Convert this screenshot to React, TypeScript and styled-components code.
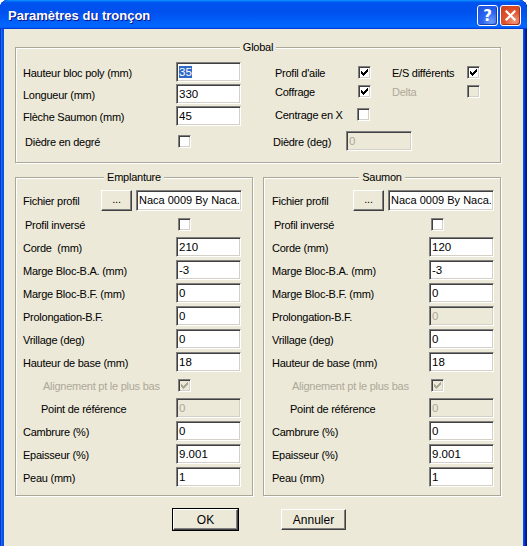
import { FC } from "react";
import styled, { createGlobalStyle } from "styled-components";

const GlobalStyle = createGlobalStyle`
    html, body {
        margin: 0;
        padding: 0;
        background: #ffffff;
    }
    body {
        font-family: "Liberation Sans", Arial, sans-serif;
        font-size: 11px;
        letter-spacing: -0.25px;
        color: #000;
    }
`;

type Row =
    | { kind: "file" }
    | { kind: "input"; label: string; value: string; disabled?: boolean; indent?: number }
    | { kind: "check"; label: string; checked?: boolean; disabled?: boolean; indent?: number };

const panelRows = (corde: string, cordeLabel: string, prolongDisabled: boolean): Row[] => [
    { kind: "file" },
    { kind: "check", label: "Profil inversé", indent: 2 },
    { kind: "input", label: cordeLabel, value: corde },
    { kind: "input", label: "Marge Bloc-B.A. (mm)", value: "-3" },
    { kind: "input", label: "Marge Bloc-B.F. (mm)", value: "0" },
    { kind: "input", label: "Prolongation-B.F.", value: "0", disabled: prolongDisabled },
    { kind: "input", label: "Vrillage (deg)", value: "0" },
    { kind: "input", label: "Hauteur de base (mm)", value: "18" },
    { kind: "check", label: "Alignement pt le plus bas", checked: true, disabled: true, indent: 20 },
    { kind: "input", label: "Point de référence", value: "0", disabled: true, indent: 18 },
    { kind: "input", label: "Cambrure (%)", value: "0" },
    { kind: "input", label: "Epaisseur (%)", value: "9.001" },
    { kind: "input", label: "Peau (mm)", value: "1" },
];

const Tick: FC<{ disabled?: boolean }> = ({ disabled }) => (
    <svg width="7" height="7" viewBox="0 0 7 7" shapeRendering="crispEdges">
        <polygon
            points="0,2 2,4 7,-1 7,2 2,7 0,5"
            fill={disabled ? "#ACA899" : "#000"}
        />
    </svg>
);

const Check: FC<{ checked?: boolean; disabled?: boolean }> = ({ checked, disabled }) => (
    <CheckBox $disabled={disabled}>{checked && <Tick disabled={disabled} />}</CheckBox>
);

const Panel: FC<{
    title: string;
    rows: Row[];
    padLeft: number;
    labelWidth: number;
    fileLabelWidth: number;
}> = ({ title, rows, padLeft, labelWidth, fileLabelWidth }) => (
    <GroupBox $width={238}>
        <Caption>{title}</Caption>
        <PanelBody $padLeft={padLeft}>
            {rows.map((row, i) => {
                if (row.kind === "file") {
                    return (
                        <FileRow key={i}>
                            <Label $w={fileLabelWidth}>Fichier profil</Label>
                            <SmallButton>...</SmallButton>
                            <NameBox>Naca 0009 By Naca.</NameBox>
                        </FileRow>
                    );
                }
                if (row.kind === "check") {
                    return (
                        <FieldRow key={i}>
                            <Label $w={labelWidth} $indent={row.indent} $disabled={row.disabled}>
                                {row.label}
                            </Label>
                            <CheckSlot>
                                <Check checked={row.checked} disabled={row.disabled} />
                            </CheckSlot>
                        </FieldRow>
                    );
                }
                return (
                    <FieldRow key={i}>
                        <Label $w={labelWidth} $indent={row.indent}>
                            {row.label}
                        </Label>
                        <TextBox $disabled={row.disabled}>{row.value}</TextBox>
                    </FieldRow>
                );
            })}
        </PanelBody>
    </GroupBox>
);

const App: FC = () => (
    <>
        <GlobalStyle />
        <Window>
            <TitleBar>
                <Title>Paramètres du tronçon</Title>
                <TitleButtons>
                    <HelpButton>?</HelpButton>
                    <CloseButton>
                        <svg width="11" height="11" viewBox="0 0 11 11">
                            <path
                                d="M1.5 1.5 L9.5 9.5 M9.5 1.5 L1.5 9.5"
                                stroke="#fff"
                                strokeWidth="2.2"
                                strokeLinecap="square"
                            />
                        </svg>
                    </CloseButton>
                </TitleButtons>
            </TitleBar>
            <Client>
                <GroupBox $width={486}>
                    <Caption>Global</Caption>
                    <GlobalBody>
                        <Column $width={218}>
                            <FieldRow>
                                <Label $w={153}>Hauteur bloc poly (mm)</Label>
                                <TextBox>
                                    <Selected>35</Selected>
                                </TextBox>
                            </FieldRow>
                            <FieldRow>
                                <Label $w={153}>Longueur (mm)</Label>
                                <TextBox>330</TextBox>
                            </FieldRow>
                            <FieldRow>
                                <Label $w={153}>Flèche Saumon (mm)</Label>
                                <TextBox>45</TextBox>
                            </FieldRow>
                            <FieldRow $mt={3}>
                                <Label $w={153} $indent={2}>Dièdre en degré</Label>
                                <CheckSlot>
                                    <Check />
                                </CheckSlot>
                            </FieldRow>
                        </Column>
                        <Column $width={210}>
                            <CheckRow $mt={2}>
                                <Label $w={83}>Profil d'aile</Label>
                                <Check checked />
                                <Label $w={75} $ml={21}>E/S différents</Label>
                                <Check checked />
                            </CheckRow>
                            <CheckRow $mt={1}>
                                <Label $w={83}>Coffrage</Label>
                                <Check checked />
                                <Label $w={75} $ml={21} $disabled>Delta</Label>
                                <Check disabled />
                            </CheckRow>
                            <CheckRow $mt={5}>
                                <Label $w={82}>Centrage en X</Label>
                                <Check />
                            </CheckRow>
                            <FieldRow $mt={7}>
                                <Label $w={73} $indent={-2}>Dièdre (deg)</Label>
                                <TextBox $disabled $width={66}>0</TextBox>
                            </FieldRow>
                        </Column>
                    </GlobalBody>
                </GroupBox>
                <Panels>
                    <Panel
                        title="Emplanture"
                        rows={panelRows("210", "Corde  (mm)", false)}
                        padLeft={7}
                        labelWidth={153}
                        fileLabelWidth={78}
                    />
                    <Panel
                        title="Saumon"
                        rows={panelRows("120", "Corde (mm)", true)}
                        padLeft={8}
                        labelWidth={157}
                        fileLabelWidth={81}
                    />
                </Panels>
                <Footer>
                    <PushButton $default>OK</PushButton>
                    <PushButton>Annuler</PushButton>
                </Footer>
            </Client>
        </Window>
    </>
);

export default App;

const Window = styled.div`
    width: 527px;
    height: 546px;
    overflow: hidden;
    display: flex;
    flex-direction: column;
    background: #0054e3;
    border-radius: 8px 8px 0 0;
    box-shadow: inset -1px 0 #00138c, inset 1px 0 #0831d9, inset -2px 0 #001ea0,
        inset 2px 0 #166aee, inset -3px 0 #003bda, inset 3px 0 #0855dd;
`;

const TitleBar = styled.div`
    height: 29px;
    flex-shrink: 0;
    display: flex;
    align-items: center;
    justify-content: space-between;
    padding: 0 6px 0 8px;
    border-radius: 8px 8px 0 0;
    background: linear-gradient(
        180deg,
        #0997ff,
        #0053ee 8%,
        #0050ee 40%,
        #06f 88%,
        #06f 93%,
        #005bff 95%,
        #003dd7 96%,
        #003dd7
    );
`;

const Title = styled.div`
    font-family: "Liberation Sans", Arial, sans-serif;
    font-weight: bold;
    font-size: 13px;
    letter-spacing: 0;
    color: #fff;
    text-shadow: 1px 1px #0f1089;
    padding-top: 2px;
`;

const TitleButtons = styled.div`
    display: flex;
    gap: 2px;
    padding-top: 2px;
`;

const CaptionButton = styled.div`
    width: 21px;
    height: 21px;
    box-sizing: border-box;
    border: 1px solid #fff;
    border-radius: 3px;
    display: flex;
    align-items: center;
    justify-content: center;
    color: #fff;
`;

const HelpButton = styled(CaptionButton)`
    background: radial-gradient(circle at 70% 80%, #6d9cf7 0%, #2a64ef 45%, #1a4fdc 100%);
    box-shadow: inset -1px -1px #1440b8;
    font-family: "DejaVu Sans", sans-serif;
    font-weight: bold;
    font-size: 15px;
    letter-spacing: 0;
`;

const CloseButton = styled(CaptionButton)`
    background: radial-gradient(circle at 70% 80%, #f29a7d 0%, #e2552f 45%, #c73c18 100%);
    box-shadow: inset -1px -1px #a8331a;
`;

const Client = styled.div`
    flex: 1;
    margin: 0 4px;
    background: #ece9d8;
    padding: 18px 0 0 11px;
`;

const GroupBox = styled.div<{ $width: number }>`
    width: ${(p) => p.$width}px;
    box-sizing: border-box;
    border: 1px solid #aca899;
    box-shadow: inset 1px 1px 0 #fff, 1px 1px 0 #fff;
    display: flex;
    flex-direction: column;
`;

const Caption = styled.div`
    align-self: center;
    margin-top: -7px;
    padding: 0 3px;
    line-height: 13px;
    background: #ece9d8;
`;

const GlobalBody = styled.div`
    display: flex;
    gap: 34px;
    padding: 8px 0 11px 7px;
`;

const Column = styled.div<{ $width: number }>`
    width: ${(p) => p.$width}px;
    display: flex;
    flex-direction: column;
    gap: 2px;
`;

const Panels = styled.div`
    display: flex;
    gap: 10px;
    margin-top: 14px;
`;

const PanelBody = styled.div<{ $padLeft: number }>`
    display: flex;
    flex-direction: column;
    gap: 3px;
    padding: 5px 0 8px ${(p) => p.$padLeft}px;
`;

const FieldRow = styled.div<{ $mt?: number }>`
    height: 20px;
    display: flex;
    align-items: center;
    margin-top: ${(p) => p.$mt ?? 0}px;
`;

const CheckRow = styled.div<{ $mt?: number }>`
    height: 16px;
    display: flex;
    align-items: center;
    margin-top: ${(p) => p.$mt ?? 0}px;
`;

const FileRow = styled.div`
    height: 22px;
    display: flex;
    align-items: center;
`;

const Label = styled.div<{ $w: number; $indent?: number; $ml?: number; $disabled?: boolean }>`
    width: ${(p) => p.$w}px;
    box-sizing: border-box;
    padding-left: ${(p) => Math.max(p.$indent ?? 0, 0)}px;
    margin-left: ${(p) => (p.$ml ?? 0) + Math.min(p.$indent ?? 0, 0)}px;
    white-space: pre;
    color: ${(p) => (p.$disabled ? "#aca899" : "#000")};
    padding-top: 2px;
`;

const TextBox = styled.div<{ $disabled?: boolean; $width?: number }>`
    width: ${(p) => p.$width ?? 65}px;
    height: 20px;
    box-sizing: border-box;
    border-top: 1px solid #808080;
    border-left: 1px solid #808080;
    border-right: 1px solid #fff;
    border-bottom: 1px solid #fff;
    box-shadow: inset 1px 1px 0 #404040, inset -1px -1px 0 #d4d0c8;
    background: ${(p) => (p.$disabled ? "#ece9d8" : "#fff")};
    color: ${(p) => (p.$disabled ? "#aca899" : "#000")};
    padding: 3px 0 0 2px;
    line-height: 13px;
    font-size: 11.5px;
    letter-spacing: 0;
`;

const Selected = styled.span`
    background: #316ac5;
    color: #fff;
`;

const NameBox = styled(TextBox)`
    width: 106px;
    height: 21px;
    margin-left: 4px;
    font-size: 11px;
    letter-spacing: 0;
    white-space: nowrap;
    overflow: hidden;
`;

const CheckSlot = styled.div`
    padding-left: 2px;
    display: flex;
`;

const CheckBox = styled.div<{ $disabled?: boolean }>`
    width: 13px;
    height: 13px;
    box-sizing: border-box;
    flex-shrink: 0;
    border-top: 1px solid #808080;
    border-left: 1px solid #808080;
    border-right: 1px solid #fff;
    border-bottom: 1px solid #fff;
    box-shadow: inset 1px 1px 0 #404040, inset -1px -1px 0 #d4d0c8;
    background: ${(p) => (p.$disabled ? "#ece9d8" : "#fff")};
    display: flex;
    align-items: center;
    justify-content: center;
`;

const RaisedButton = styled.div`
    box-sizing: border-box;
    display: flex;
    align-items: center;
    justify-content: center;
    background: #ece9d8;
    border-top: 1px solid #fff;
    border-left: 1px solid #fff;
    border-right: 1px solid #404040;
    border-bottom: 1px solid #404040;
    box-shadow: inset -1px -1px 0 #808080;
`;

const SmallButton = styled(RaisedButton)`
    width: 31px;
    height: 21px;
    padding-bottom: 2px;
`;

const Footer = styled.div`
    display: flex;
    gap: 43px;
    margin: 13px 0 0 158px;
`;

const PushButton = styled(RaisedButton)<{ $default?: boolean }>`
    width: 65px;
    height: 21px;
    font-size: 12px;
    letter-spacing: 0;
    outline: ${(p) => (p.$default ? "1px solid #000" : "none")};
`;
